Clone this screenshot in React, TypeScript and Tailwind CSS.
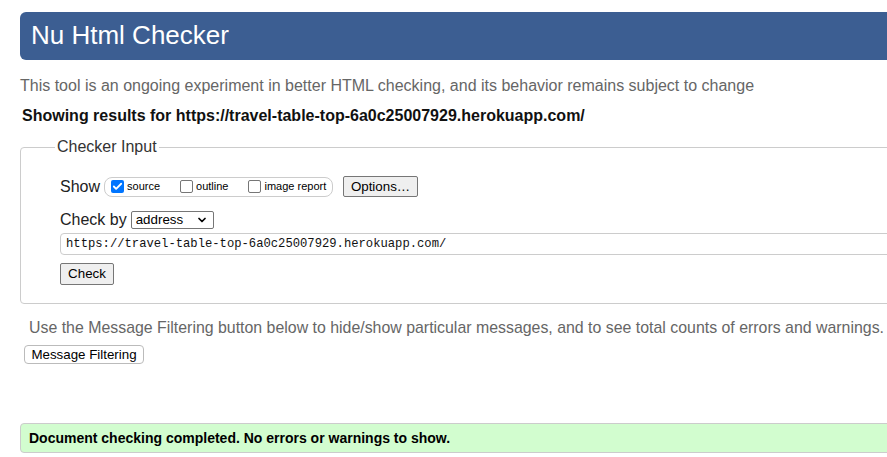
import { Check as CheckIcon, ChevronDown } from 'lucide-react';

const sans = 'font-["Liberation_Sans",Arial,sans-serif]';

function Tick({ checked }: { checked?: boolean }) {
  return checked ? (
    <span className="inline-flex h-[13px] w-[13px] items-center justify-center rounded-[2px] bg-[#0075ff]">
      <CheckIcon className="h-[11px] w-[11px] text-white" strokeWidth={4} />
    </span>
  ) : (
    <span className="inline-block h-[13px] w-[13px] rounded-[2px] border border-[#767676] bg-white" />
  );
}

export default function App() {
  return (
    <div className={`w-[887px] h-[457px] overflow-hidden bg-white text-black ${sans}`}>
      <div className="w-[960px] pl-[20px]">
        {/* cabecera */}
        <div className="mt-[12px] h-[48px] rounded-l-[6px] bg-[#3c5e92] pl-[11px] pt-[7px]">
          <h1 className="text-[26px] leading-[32px] text-white">Nu Html Checker</h1>
        </div>

        <p className="mt-[16px] text-[16px] leading-[20px] text-[#666]">
          This tool is an ongoing experiment in better HTML checking, and its behavior remains subject to change
        </p>
        <p className="mt-[10px] pl-[2px] text-[16px] font-bold leading-[20px] text-[#111]">
          Showing results for https://travel-table-top-6a0c25007929.herokuapp.com/
        </p>

        {/* formulario */}
        <fieldset className="mt-[12px] h-[166px] rounded-[4px] border border-[#ccc] pl-[39px] pr-0">
          <legend className="-ml-[5px] px-[2px] text-[16px] leading-[18px] text-[#333]">Checker Input</legend>

          <div className="mt-[20px] flex items-center">
            <span className="text-[16px] leading-[20px] text-[#222]">Show</span>
            <div className="ml-[4px] flex h-[20px] w-[229px] items-center rounded-[8px] border border-[#ccc] pl-[6px] text-[11px]">
              <label className="flex items-center gap-[3px]"><Tick checked /> source</label>
              <label className="ml-[20px] flex items-center gap-[3px]"><Tick /> outline</label>
              <label className="ml-[20px] flex items-center gap-[3px]"><Tick /> image report</label>
            </div>
            <button className="ml-[10px] h-[21px] w-[75px] rounded-[2px] border border-[#767676] bg-[#efefef] text-[13.33px] leading-[19px] text-black">
              Options…
            </button>
          </div>

          <div className="mt-[13px] flex items-center">
            <span className="text-[16px] leading-[20px] text-[#222]">Check by</span>
            <div className="ml-[4px] flex h-[18px] w-[83px] items-center justify-between rounded-[2px] border border-[#767676] pl-[4px] pr-[5px] text-[13.33px]">
              address
              <ChevronDown className="h-[12px] w-[12px]" strokeWidth={3.5} />
            </div>
          </div>

          <div className="mt-[3px] flex h-[22px] items-center rounded-[4px] border border-[#ccc] pl-[5px] font-['Liberation_Mono',monospace] text-[12.2px] text-[#111]">
            https://travel-table-top-6a0c25007929.herokuapp.com/
          </div>

          <button className="mt-[8px] h-[22px] w-[54px] rounded-[2px] border border-[#767676] bg-[#efefef] text-[13.33px] leading-[20px]">
            Check
          </button>
        </fieldset>

        <p className="mt-[14px] whitespace-nowrap pl-[9px] text-[15.9px] leading-[20px] text-[#666]">
          Use the Message Filtering button below to hide/show particular messages, and to see total counts of errors and warnings.
        </p>
        <button className="ml-[4px] mt-[7px] h-[19px] w-[120px] rounded-[4px] border border-[#bbb] bg-white text-[13.33px] leading-[17px]">
          Message Filtering
        </button>

        <div className="mt-[57px] flex h-[30px] items-center rounded-l-[4px] border border-[#ccc] bg-[#d2fdcf] pl-[8px] text-[14px] font-bold">
          Document checking completed. No errors or warnings to show.
        </div>
      </div>
    </div>
  );
}
